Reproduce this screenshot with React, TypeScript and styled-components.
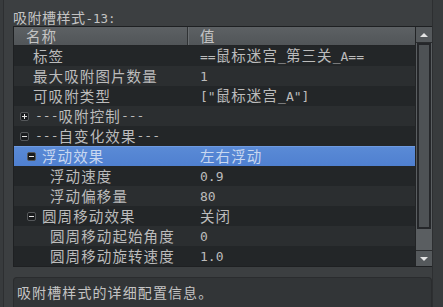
import styled, { createGlobalStyle } from 'styled-components';

const GlobalStyle = createGlobalStyle`
  html, body {
    margin: 0;
    padding: 0;
    background: #383b3d;
    overflow: hidden;
  }
  body {
    font-family: "Noto Sans CJK SC", "DejaVu Sans", sans-serif;
    font-size: 14px;
    letter-spacing: 1px;
    color: #bcbcbc;
  }
`;

interface Prop {
  name: string;
  value?: string;
  pad: number;
  toggle?: 'plus' | 'minus';
  selected?: boolean;
}

const rows: Prop[] = [
  { name: '标签', value: '==鼠标迷宫_第三关_A==', pad: 19 },
  { name: '最大吸附图片数量', value: '1', pad: 19 },
  { name: '可吸附类型', value: '["鼠标迷宫_A"]', pad: 19 },
  { name: '---吸附控制---', pad: 6, toggle: 'plus' },
  { name: '---自变化效果---', pad: 6, toggle: 'minus' },
  { name: '浮动效果', value: '左右浮动', pad: 13, toggle: 'minus', selected: true },
  { name: '浮动速度', value: '0.9', pad: 36 },
  { name: '浮动偏移量', value: '80', pad: 36 },
  { name: '圆周移动效果', value: '关闭', pad: 13, toggle: 'minus' },
  { name: '圆周移动起始角度', value: '0', pad: 36 },
  { name: '圆周移动旋转速度', value: '1.0', pad: 36 },
];

// ascii runs get the half-width mono face, like the original mono CJK font
function Mixed({ text, size = 12.5 }: { text: string; size?: number }) {
  const parts = text.split(/([\x20-\x7e]+)/).filter(Boolean);
  return (
    <>
      {parts.map((p, i) =>
        /^[\x20-\x7e]+$/.test(p) ? (
          <Half key={i} $size={size}>
            {p}
          </Half>
        ) : (
          <span key={i}>{p}</span>
        )
      )}
    </>
  );
}

export default function App() {
  return (
    <>
      <GlobalStyle />
      <Frame>
        <Title>
          <Mixed text="吸附槽样式-13:" />
        </Title>
        <Table>
          <Main>
            <Header>
              <HeadCell $width={174}>名称</HeadCell>
              <HeadCell>值</HeadCell>
            </Header>
            {rows.map((r, i) => (
              <Row key={i} $odd={i % 2 === 0} $selected={!!r.selected}>
                <NameCell $pad={r.pad}>
                  {r.toggle && <Toggle $plus={r.toggle === 'plus'} />}
                  <Mixed text={r.name} size={13} />
                </NameCell>
                {r.value !== undefined && (
                  <ValueCell>
                    <Mixed text={r.value} size={13} />
                  </ValueCell>
                )}
              </Row>
            ))}
          </Main>
          <ScrollBar>
            <ScrollButton>
              <Arrow $up />
            </ScrollButton>
            <Track>
              <Thumb />
            </Track>
            <ScrollButton>
              <Arrow />
            </ScrollButton>
          </ScrollBar>
        </Table>
        <Description>
          <Mixed text="吸附槽样式的详细配置信息。" />
        </Description>
      </Frame>
    </>
  );
}

const Frame = styled.div`
  margin-left: 3px;
  width: 430px;
  height: 307px;
  box-sizing: border-box;
  border-left: 1px solid #2d2f31;
  border-right: 1px solid #2d2f31;
  background: #3c3f41;
  padding-left: 9px;
  display: flex;
  flex-direction: column;
`;

const Half = styled.span<{ $size: number }>`
  font-family: "DejaVu Sans Mono", "Liberation Mono", monospace;
  font-size: ${(p) => p.$size}px;
  letter-spacing: 0;
`;

const Title = styled.div`
  height: 18px;
  line-height: 18px;
  margin-top: 8px;
  color: #c4c4c4;
  letter-spacing: 0.5px;
  white-space: nowrap;
`;

const Table = styled.div`
  height: 241px;
  box-sizing: border-box;
  border: 1px solid #1e2022;
  border-right: none;
  display: flex;
`;

const Main = styled.div`
  flex: 1;
  display: flex;
  flex-direction: column;
  background: #2a2d2f;
`;

const Header = styled.div`
  height: 19px;
  box-sizing: border-box;
  display: flex;
  background: linear-gradient(#5d6164, #515558);
  border-bottom: 1px solid #222426;
`;

const HeadCell = styled.div<{ $width?: number }>`
  ${(p) => (p.$width ? `width: ${p.$width}px;` : 'flex: 1;')}
  box-sizing: border-box;
  padding-left: 12px;
  line-height: 18px;
  font-size: 14.5px;
  letter-spacing: 1.1px;
  color: #c4c4c4;
  border-right: ${(p) => (p.$width ? '1px solid #2f3234' : 'none')};
  box-shadow: ${(p) => (p.$width ? '1px 0 0 #6a6e71' : 'none')};
`;

const Row = styled.div<{ $odd: boolean; $selected: boolean }>`
  height: 20px;
  display: flex;
  align-items: center;
  white-space: nowrap;
  font-size: 14.5px;
  letter-spacing: 1.1px;
  background: ${(p) =>
    p.$selected
      ? 'linear-gradient(#6e9ae0 0, #6e9ae0 1px, #5a8ad6 1px, #4f80d0 100%)'
      : p.$odd
        ? '#232628'
        : '#2b2e30'};
  color: ${(p) => (p.$selected ? '#c9d8f0' : '#bcbcbc')};
`;

const NameCell = styled.div<{ $pad: number }>`
  width: 174px;
  box-sizing: border-box;
  padding-left: ${(p) => p.$pad}px;
  display: flex;
  align-items: center;
  line-height: 20px;
`;

const ValueCell = styled.div`
  flex: 1;
  padding-left: 12px;
  line-height: 20px;
`;

const Toggle = styled.span<{ $plus: boolean }>`
  position: relative;
  width: 9px;
  height: 9px;
  box-sizing: border-box;
  margin-right: 6px;
  background: #1a1c1e;
  border: 1px solid #55585b;
  border-radius: 2px;
  flex: none;

  &::before {
    content: '';
    position: absolute;
    left: 1px;
    top: 3px;
    width: 5px;
    height: 1px;
    background: #e4e4e4;
  }

  &::after {
    content: '';
    display: ${(p) => (p.$plus ? 'block' : 'none')};
    position: absolute;
    left: 3px;
    top: 1px;
    width: 1px;
    height: 5px;
    background: #e4e4e4;
  }
`;

const ScrollBar = styled.div`
  width: 17px;
  box-sizing: border-box;
  border-left: 1px solid #222426;
  display: flex;
  flex-direction: column;
  background: #5a5e61;
`;

const ScrollButton = styled.div`
  height: 15px;
  display: flex;
  align-items: center;
  justify-content: center;
  background: #55595c;
  border-bottom: 1px solid #2a2c2e;
  &:last-child {
    border-bottom: none;
    border-top: 1px solid #2a2c2e;
    height: 15px;
  }
`;

const Arrow = styled.span<{ $up?: boolean }>`
  width: 0;
  height: 0;
  border-left: 4px solid transparent;
  border-right: 4px solid transparent;
  ${(p) => (p.$up ? 'border-bottom: 4px solid #e4e4e4;' : 'border-top: 4px solid #e4e4e4;')}
`;

const Track = styled.div`
  flex: 1;
  display: flex;
  flex-direction: column;
`;

const Thumb = styled.div`
  height: 186px;
  box-sizing: border-box;
  margin: 0 1px;
  border: 2px solid #25272a;
  background: #4e5255;
`;

const Description = styled.div`
  margin-top: 10px;
  flex: 1;
  box-sizing: border-box;
  border: 1px solid #2a2c2e;
  border-bottom: none;
  border-radius: 4px 4px 0 0;
  background: #323537;
  padding: 4px 3px;
  line-height: 20px;
  letter-spacing: 1.1px;
  color: #c4c4c4;
  white-space: nowrap;
`;
